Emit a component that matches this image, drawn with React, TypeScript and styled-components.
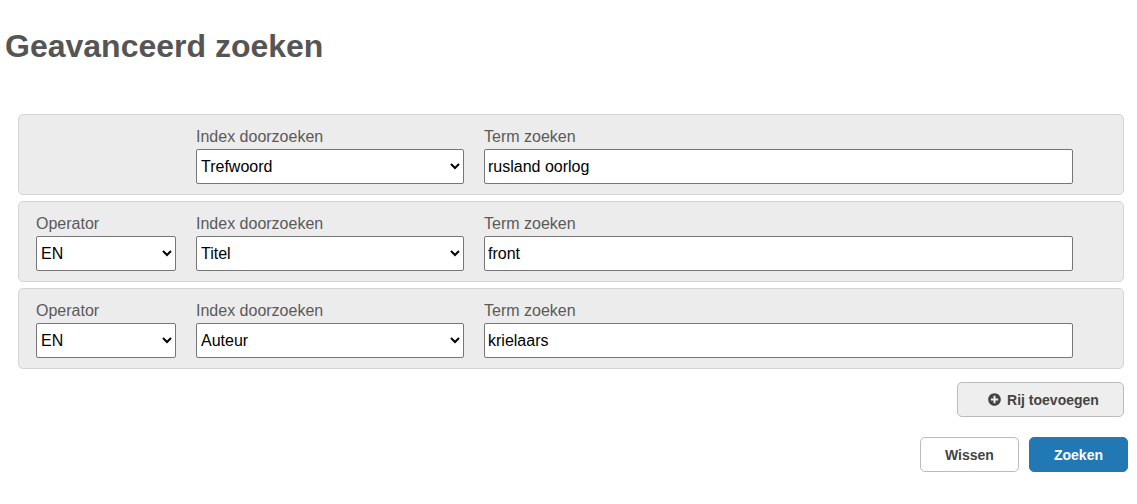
import React, { useId, useState } from "react";
import styled, { createGlobalStyle, css } from "styled-components";
import { FaPlusCircle } from "react-icons/fa";

const GlobalStyle = createGlobalStyle`
  *, *::before, *::after { box-sizing: border-box; }
  body {
    margin: 0;
    background: #fff;
    color: #555;
    font: 16px/18px Arial, "Liberation Sans", sans-serif;
  }
`;

const Page = styled.main`
  padding: 28px 9px 32px 5px;
`;

const Title = styled.h1`
  margin: 0 0 50px;
  font-size: 32px;
  line-height: 36px;
  font-weight: bold;
  color: #555;
`;

const Rows = styled.div`
  display: flex;
  flex-direction: column;
  gap: 6px;
  margin: 0 4px 0 13px;
`;

const Row = styled.div`
  display: grid;
  grid-template-columns: 140px 268px minmax(0, 1fr);
  column-gap: 20px;
  padding: 13px 50px 10px 17px;
  border: 1px solid #d4d4d4;
  border-radius: 5px;
  background: #ececec;
`;

const Field = styled.div<{ $column: number }>`
  grid-column: ${(p) => p.$column};
  display: flex;
  flex-direction: column;
  gap: 3px;
`;

const Label = styled.label`
  color: #5a5a5a;
`;

const control = css`
  width: 100%;
  height: 35px;
  margin: 0;
  border: 1px solid #767676;
  border-radius: 2px;
  background-color: #fff;
  color: #000;
  font: inherit;
`;

const Select = styled.select`
  ${control}
  padding: 0;
`;

const TextInput = styled.input`
  ${control}
  padding: 0 3px;
`;

const Actions = styled.div<{ $inset?: boolean }>`
  display: flex;
  justify-content: flex-end;
  gap: 10px;
  margin: ${(p) => (p.$inset ? "13px 4px 20px 0" : "0")};
`;

const variants = {
  plain: css`
    background: #fff;
    border-color: #bbb;
    color: #444;
  `,
  muted: css`
    min-width: 167px;
    padding-left: 30px;
    background: #eee;
    border-color: #bbb;
    color: #444;
  `,
  primary: css`
    background: #2277b5;
    border-color: #2277b5;
    color: #fff;
  `,
};

const Button = styled.button<{ $variant: keyof typeof variants }>`
  display: inline-flex;
  align-items: center;
  justify-content: center;
  gap: 6px;
  min-width: 99px;
  height: 35px;
  padding: 0 24px;
  border: 1px solid;
  border-radius: 5px;
  font: bold 14px/18px Arial, "Liberation Sans", sans-serif;
  cursor: pointer;
  ${(p) => variants[p.$variant]}
`;

const INDEXES = ["Trefwoord", "Titel", "Auteur"];
const OPERATORS = ["EN", "OF", "NIET"];

type Criterion = { operator: string; index: string; term: string };

const INITIAL: Criterion[] = [
  { operator: "EN", index: "Trefwoord", term: "rusland oorlog" },
  { operator: "EN", index: "Titel", term: "front" },
  { operator: "EN", index: "Auteur", term: "krielaars" },
];

type RowProps = {
  value: Criterion;
  first: boolean;
  onChange: (patch: Partial<Criterion>) => void;
};

function CriterionRow({ value, first, onChange }: RowProps) {
  const id = useId();
  return (
    <Row>
      {!first && (
        <Field $column={1}>
          <Label htmlFor={`${id}-operator`}>Operator</Label>
          <Select
            id={`${id}-operator`}
            value={value.operator}
            onChange={(e) => onChange({ operator: e.target.value })}
          >
            {OPERATORS.map((o) => (
              <option key={o}>{o}</option>
            ))}
          </Select>
        </Field>
      )}
      <Field $column={2}>
        <Label htmlFor={`${id}-index`}>Index doorzoeken</Label>
        <Select
          id={`${id}-index`}
          value={value.index}
          onChange={(e) => onChange({ index: e.target.value })}
        >
          {INDEXES.map((o) => (
            <option key={o}>{o}</option>
          ))}
        </Select>
      </Field>
      <Field $column={3}>
        <Label htmlFor={`${id}-term`}>Term zoeken</Label>
        <TextInput
          id={`${id}-term`}
          type="text"
          value={value.term}
          onChange={(e) => onChange({ term: e.target.value })}
        />
      </Field>
    </Row>
  );
}

export default function App() {
  const [criteria, setCriteria] = useState(INITIAL);

  const update = (at: number, patch: Partial<Criterion>) =>
    setCriteria((all) => all.map((c, i) => (i === at ? { ...c, ...patch } : c)));
  const addRow = () =>
    setCriteria((all) => [...all, { operator: "EN", index: "Trefwoord", term: "" }]);
  const clear = () => setCriteria((all) => all.map((c) => ({ ...c, term: "" })));

  return (
    <>
      <GlobalStyle />
      <Page>
        <Title>Geavanceerd zoeken</Title>
        <form onSubmit={(e) => e.preventDefault()}>
          <Rows>
            {criteria.map((c, i) => (
              <CriterionRow
                key={i}
                value={c}
                first={i === 0}
                onChange={(patch) => update(i, patch)}
              />
            ))}
          </Rows>
          <Actions $inset>
            <Button type="button" $variant="muted" onClick={addRow}>
              <FaPlusCircle size={13} aria-hidden />
              Rij toevoegen
            </Button>
          </Actions>
          <Actions>
            <Button type="button" $variant="plain" onClick={clear}>
              Wissen
            </Button>
            <Button type="submit" $variant="primary">
              Zoeken
            </Button>
          </Actions>
        </form>
      </Page>
    </>
  );
}
